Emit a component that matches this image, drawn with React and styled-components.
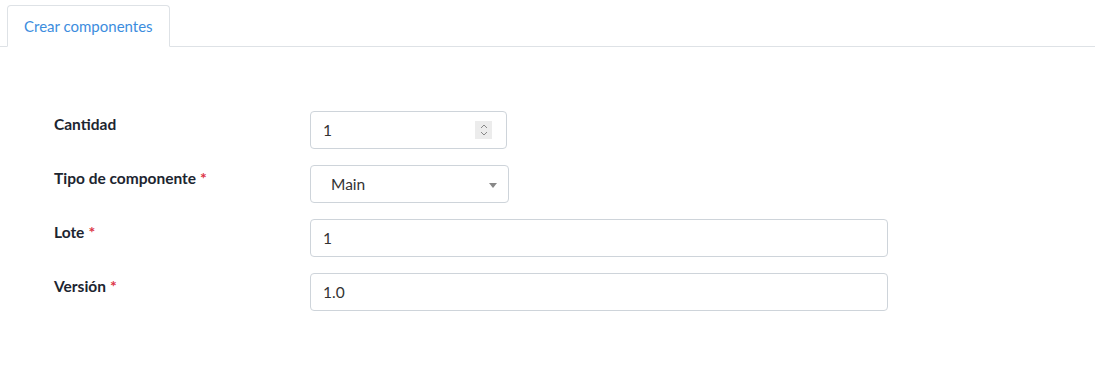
import React from 'react';
import styled, { createGlobalStyle } from 'styled-components';

const GlobalStyle = createGlobalStyle`
  body{
    margin: 0;
    background: #fff;
    font-family: Lato, "Open Sans", "Liberation Sans", sans-serif;
  }
`;

//tabs
const TabBar = styled.div`
  display: flex;
  padding: 5px 0 0 7px;
  border-bottom: 1px solid #dee2e6;
`;

const Tab = styled.div`
  height: 40px;
  padding: 0 16px;
  display: flex;
  align-items: center;
  margin-bottom: -1px;
  background: #fff;
  color: #3c8dde;
  font-size: 15px;
  border: 1px solid #dee2e6;
  border-bottom-color: #fff;
  border-radius: 4px 4px 0 0;
`;

//form
const Form = styled.div`
  padding: 64px 0 0 54px;
  display: flex;
  flex-direction: column;
  gap: 16px;
`;

const Row = styled.div`
  display: grid;
  grid-template-columns: 256px 1fr;
  align-items: start;
`;

const Label = styled.label`
  font-weight: 700;
  font-size: 15.5px;
  color: #1c2530;
  padding-top: 3px;
  line-height: 20px;
`;

const Req = styled.span`
  color: #dc3545;
  margin-left: 4px;
  font-size: 16px;
`;

const Field = styled.div`
  position: relative;
  width: ${p => p.w}px;
  height: 38px;
  box-sizing: border-box;
  border: 1px solid #ced4da;
  border-radius: 4px;
  display: flex;
  align-items: center;
  padding-left: ${p => p.pad || 12}px;
  font-size: 15.5px;
  color: #333;
  background: #fff;
`;

const Spinner = styled.div`
  position: absolute;
  right: 14px;
  top: 9px;
  width: 17px;
  height: 18px;
  background: #ececec;
  display: flex;
  align-items: center;
  justify-content: center;
`;

const Caret = styled.div`
  position: absolute;
  right: 11px;
  top: 17px;
  width: 0;
  height: 0;
  border-left: 4px solid transparent;
  border-right: 4px solid transparent;
  border-top: 5px solid #888;
`;

export default function App() {
  return (
    <>
      <GlobalStyle />
      <TabBar>
        <Tab>Crear componentes</Tab>
      </TabBar>
      <Form>
        <Row>
          <Label>Cantidad</Label>
          <Field w={197}>
            1
            <Spinner>
              <svg width="10" height="14" viewBox="0 0 10 14">
                <path d="M2 5 L5 2 L8 5 M2 9 L5 12 L8 9" fill="none" stroke="#888" strokeWidth="1" />
              </svg>
            </Spinner>
          </Field>
        </Row>
        <Row>
          <Label>Tipo de componente<Req>*</Req></Label>
          <Field w={199} pad={20}>
            Main
            <Caret />
          </Field>
        </Row>
        <Row>
          <Label>Lote<Req>*</Req></Label>
          <Field w={578}>1</Field>
        </Row>
        <Row>
          <Label>Versión<Req>*</Req></Label>
          <Field w={578}>1.0</Field>
        </Row>
      </Form>
    </>
  );
}
